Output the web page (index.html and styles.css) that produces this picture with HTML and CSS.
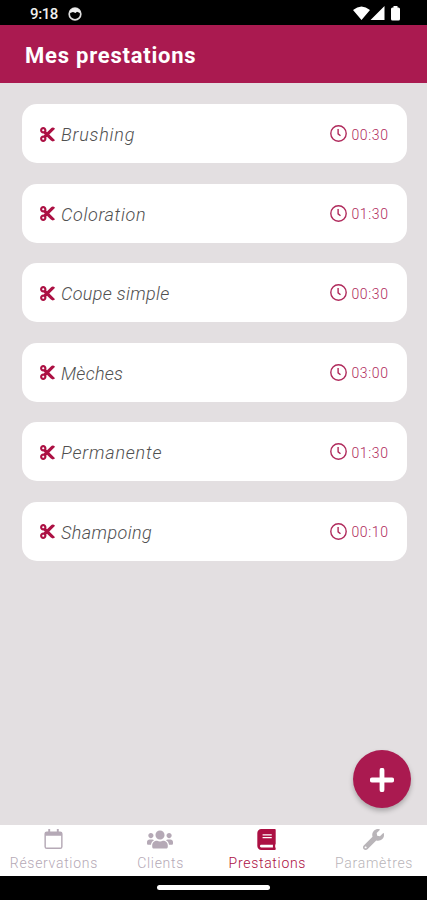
FILE: index.html
```
<!DOCTYPE html>
<html lang="fr">
<head>
<meta charset="UTF-8">
<meta name="viewport" content="width=device-width, initial-scale=1.0">
<title>Mes prestations</title>
<link rel="stylesheet" href="styles.css">
</head>
<body>

<svg class="sprite" aria-hidden="true">
  <symbol id="cut" viewBox="0 0 448 512"><path d="M278.06 256L444.48 89.57c4.69-4.69 4.69-12.29 0-16.97-32.8-32.8-85.99-32.8-118.79 0L210.18 188.12l-24.86-24.86c4.31-10.92 6.68-22.81 6.68-35.26 0-53.02-42.98-96-96-96S0 74.98 0 128s42.98 96 96 96c4.54 0 8.99-.32 13.36-.93L142.29 256l-32.93 32.93c-4.37-.61-8.83-.93-13.36-.93-53.02 0-96 42.98-96 96s42.98 96 96 96 96-42.98 96-96c0-12.45-2.37-24.34-6.68-35.26l24.86-24.86L325.69 439.4c32.8 32.8 85.99 32.8 118.79 0 4.69-4.69 4.69-12.28 0-16.97L278.06 256zM96 160c-17.64 0-32-14.36-32-32s14.36-32 32-32 32 14.36 32 32-14.36 32-32 32zm0 256c-17.64 0-32-14.36-32-32s14.36-32 32-32 32 14.36 32 32-14.36 32-32 32z"/></symbol>
  <symbol id="clock" viewBox="0 0 17 17"><g fill="none" stroke="currentColor" stroke-width="1.4"><circle cx="8.5" cy="8.5" r="7.7"/><path d="M8.1 4v4.8l2.4 2"/></g></symbol>
</svg>

<div class="phone">
  <div class="status-bar">
    <span class="time">9:18</span>
    <svg class="status-face" viewBox="0 0 14 14"><circle cx="7" cy="7" r="5.8" fill="none" stroke="#ddd" stroke-width="1.7"/><path d="M2 6V4l3-2.8h4L12 4v2L9 4.800 7.500 6 5 5z" fill="#eee"/></svg>
    <svg class="status-icons" viewBox="0 0 48 15"><path d="M0 4Q8.500-3 17 4L8.500 14zM17.500 14L31.500 0v14z" fill="#fff"/><path d="M38 3q0-1.500 1.500-1.500h1V0h4v1.500h1q1.500 0 1.500 1.500v10q0 1.500-1.500 1.500h-6q-1.500 0-1.500-1.500z" fill="#fff"/></svg>
  </div>

  <header class="header">
    <h1>Mes prestations</h1>
  </header>

  <main class="content">
    <ul class="services">
      <li class="card">
        <svg class="cut"><use href="#cut"/></svg>
        <span class="name brushing">Brushing</span>
        <svg class="clock"><use href="#clock"/></svg>
        <span class="duration">00:30</span>
      </li>
      <li class="card">
        <svg class="cut"><use href="#cut"/></svg>
        <span class="name coloration">Coloration</span>
        <svg class="clock"><use href="#clock"/></svg>
        <span class="duration">01:30</span>
      </li>
      <li class="card">
        <svg class="cut"><use href="#cut"/></svg>
        <span class="name coupe">Coupe simple</span>
        <svg class="clock"><use href="#clock"/></svg>
        <span class="duration">00:30</span>
      </li>
      <li class="card">
        <svg class="cut"><use href="#cut"/></svg>
        <span class="name meches">Mèches</span>
        <svg class="clock"><use href="#clock"/></svg>
        <span class="duration">03:00</span>
      </li>
      <li class="card">
        <svg class="cut"><use href="#cut"/></svg>
        <span class="name permanente">Permanente</span>
        <svg class="clock"><use href="#clock"/></svg>
        <span class="duration">01:30</span>
      </li>
      <li class="card">
        <svg class="cut"><use href="#cut"/></svg>
        <span class="name shampoing">Shampoing</span>
        <svg class="clock"><use href="#clock"/></svg>
        <span class="duration">00:10</span>
      </li>
    </ul>
    <button class="add-btn" aria-label="Ajouter">
      <svg viewBox="0 0 24 24"><path d="M12 2.200v19.600M2.200 12h19.600" stroke="#fff" stroke-width="4.800" stroke-linecap="round"/></svg>
    </button>
  </main>

  <nav class="tabs">
    <a class="tab">
      <svg viewBox="0 0 20 22"><path d="M4.500 0h2v2.500h7V0h2v2.500H17q2.500 0 2.500 2.500v13.500q0 2.500-2.500 2.500H3Q.5 21 .5 18.500V5Q.5 2.500 3 2.500h1.500zM2 7v11.500q0 1 1 1h14q1 0 1-1V7z"/></svg>
      <span>Réservations</span>
    </a>
    <a class="tab">
      <svg class="users" viewBox="0 0 640 512"><path d="M96 224c35.300 0 64-28.700 64-64s-28.700-64-64-64-64 28.700-64 64 28.700 64 64 64zm448 0c35.300 0 64-28.700 64-64s-28.700-64-64-64-64 28.700-64 64 28.700 64 64 64zm32 32h-64c-17.600 0-33.500 7.100-45.100 18.600 40.300 22.100 68.900 62 75.100 109.400h66c17.700 0 32-14.300 32-32v-32c0-35.300-28.700-64-64-64zm-256 0c61.900 0 112-50.100 112-112S381.900 32 320 32 208 82.100 208 144s50.100 112 112 112zm76.800 32h-8.300c-20.800 10-43.900 16-68.500 16s-47.600-6-68.500-16h-8.300C179.600 288 128 339.600 128 403.200V432c0 26.500 21.500 48 48 48h288c26.500 0 48-21.500 48-48v-28.800c0-63.600-51.600-115.200-115.200-115.200zm-223.700-13.400C161.500 263.100 145.600 256 128 256H64c-35.300 0-64 28.700-64 64v32c0 17.700 14.300 32 32 32h65.900c6.300-47.400 34.900-87.300 75.200-109.400z"/></svg>
      <span>Clients</span>
    </a>
    <a class="tab active">
      <svg viewBox="0 0 448 512"><path d="M448 360V24c0-13.300-10.700-24-24-24H96C43 0 0 43 0 96v320c0 53 43 96 96 96h328c13.300 0 24-10.700 24-24v-16c0-7.500-3.500-14.300-8.900-18.700-4.200-15.400-4.200-59.300 0-74.700 5.400-4.300 8.900-11.100 8.900-18.600zM128 134c0-3.300 2.700-6 6-6h212c3.300 0 6 2.700 6 6v20c0 3.300-2.700 6-6 6H134c-3.300 0-6-2.700-6-6v-20zm0 64c0-3.300 2.700-6 6-6h212c3.300 0 6 2.700 6 6v20c0 3.300-2.700 6-6 6H134c-3.300 0-6-2.700-6-6v-20zm253.400 250H96c-17.700 0-32-14.300-32-32 0-17.600 14.400-32 32-32h285.400c-1.900 17.100-1.900 46.900 0 64z"/></svg>
      <span>Prestations</span>
    </a>
    <a class="tab settings">
      <svg viewBox="0 0 512 512"><path d="M507.730 109.100c-2.240-9.030-13.540-12.090-20.120-5.510l-74.360 74.360-67.880-11.310-11.310-67.880 74.360-74.360c6.620-6.620 3.430-17.900-5.660-20.160-47.380-11.740-99.550.91-136.580 37.930-39.640 39.640-50.550 97.100-34.050 147.200L18.740 402.760c-24.990 24.990-24.990 65.510 0 90.500 24.990 24.990 65.510 24.990 90.500 0l213.210-213.210c50.120 16.710 107.470 5.680 147.370-34.220 37.070-37.070 49.700-89.320 37.910-136.730zM64 472c-13.250 0-24-10.750-24-24 0-13.260 10.750-24 24-24s24 10.740 24 24c0 13.250-10.750 24-24 24z"/></svg>
      <span>Paramètres</span>
    </a>
  </nav>

  <div class="home-bar"><div class="home-handle"></div></div>
</div>

</body>
</html>
```
FILE: styles.css
```
* {
  box-sizing: border-box;
}

body {
  margin: 0;
  font-family: Roboto, "Liberation Sans", sans-serif;
}

.sprite {
  position: absolute;
  width: 0;
  height: 0;
}

.phone {
  display: flex;
  flex-direction: column;
  width: 427px;
  height: 900px;
  overflow: hidden;
}

.status-bar {
  display: flex;
  align-items: center;
  flex: none;
  height: 25px;
  padding: 3px 26px 0 30px;
  background-color: #000;
  color: #eee;
}

.time {
  width: 38px;
  font-size: 15px;
  font-weight: 500;
  letter-spacing: -0.4px;
}

.status-face {
  width: 14px;
  height: 14px;
}

.status-icons {
  width: 48px;
  height: 15px;
  margin-top: -1px;
  margin-left: auto;
}

.header {
  display: flex;
  align-items: center;
  flex: none;
  height: 58px;
  padding: 2px 25px 0;
  background-color: #aa1a50;
}

h1 {
  margin: 0;
  color: #fff;
  font-size: 22px;
  font-weight: 700;
  letter-spacing: 0.77px;
}

.content {
  position: relative;
  flex: 1;
  padding: 21px 20.5px 0 21.5px;
  background-color: #e3dfe1;
}

.services {
  display: flex;
  flex-direction: column;
  gap: 20.6px;
  margin: 0;
  padding: 0;
  list-style: none;
}

.card {
  display: flex;
  align-items: center;
  height: 59px;
  padding: 1px 18px 0 18.5px;
  background-color: #fff;
  border-radius: 15px;
  color: #b02a5c;
}

.cut {
  width: 15px;
  height: 17px;
  fill: #ac1043;
}

.name {
  margin-left: 6px;
  padding-top: 1px;
  color: #505050;
  font-size: 18px;
  font-style: italic;
  font-weight: 300;
  letter-spacing: 0.5px;
}

.brushing {
  letter-spacing: 0.8px;
}

.coloration {
  letter-spacing: 0.65px;
}

.coupe {
  letter-spacing: 0.33px;
}

.meches {
  letter-spacing: 0.25px;
}

.permanente {
  letter-spacing: 0.8px;
}

.shampoing {
  letter-spacing: 0.4px;
}

.clock {
  width: 17px;
  height: 17px;
  margin: -1px 5px 0 auto;
}

.duration {
  width: 37px;
  padding-top: 1px;
  font-size: 14px;
  font-weight: 300;
  letter-spacing: 0.6px;
  white-space: nowrap;
}

.add-btn {
  position: absolute;
  right: 16px;
  bottom: 17px;
  display: flex;
  align-items: center;
  justify-content: center;
  width: 58px;
  height: 58px;
  padding: 0;
  background-color: #aa1a50;
  border: none;
  border-radius: 50%;
  box-shadow: 0 3px 5px rgba(0, 0, 0, 0.25);
}

.add-btn svg {
  width: 24px;
  height: 24px;
  margin-top: 2px;
}

.tabs {
  display: grid;
  grid-template-columns: repeat(4, 1fr);
  flex: none;
  height: 51px;
  background-color: #fff;
}

.tab {
  display: flex;
  flex-direction: column;
  align-items: center;
  padding-top: 4px;
  color: #b5a9b6;
  font-size: 14px;
  font-weight: 300;
  letter-spacing: 0.7px;
  white-space: nowrap;
}

.tab svg {
  height: 21px;
  width: 21px;
  fill: currentColor;
}

.tab .users {
  width: 26px;
}

.tab span {
  margin-top: 5px;
  padding-left: 1px;
  line-height: 16px;
}

.tab.active {
  color: #ac1043;
}

.settings {
  color: #b9b5b9;
}

.home-bar {
  display: flex;
  justify-content: center;
  flex: none;
  height: 24px;
  padding-top: 9px;
  background-color: #000;
}

.home-handle {
  width: 113px;
  height: 5px;
  background-color: #fff;
  border-radius: 3px;
}
```
